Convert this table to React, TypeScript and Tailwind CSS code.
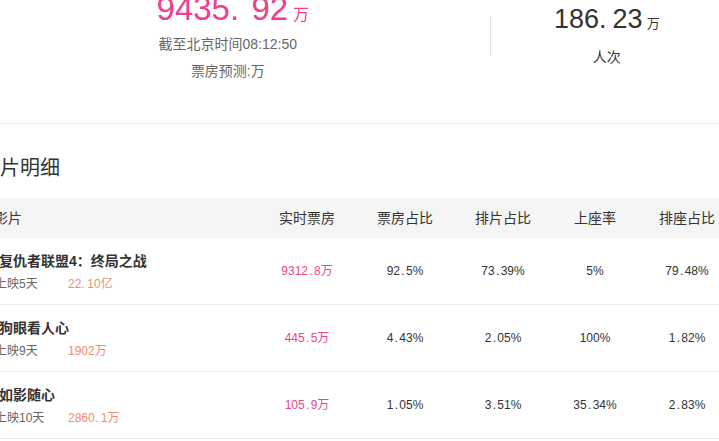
import React from "react";

function Num({ v, dot = "w-[0.5em]" }: { v: string; dot?: string }) {
  const i = v.indexOf(".");
  if (i < 0) return <>{v}</>;
  return (
    <>
      {v.slice(0, i)}
      <span className={"inline-block " + dot}>.</span>
      {v.slice(i + 1)}
    </>
  );
}

const rows = [
  { name: "复仇者联盟4：终局之战", days: "上映5天", sum: "22.10亿", bo: "9312.8万", r1: "92.5%", r2: "73.39%", r3: "5%", r4: "79.48%" },
  { name: "狗眼看人心", days: "上映9天", sum: "1902万", bo: "445.5万", r1: "4.43%", r2: "2.05%", r3: "100%", r4: "1.82%" },
  { name: "如影随心", days: "上映10天", sum: "2860.1万", bo: "105.9万", r1: "1.05%", r2: "3.51%", r3: "35.34%", r4: "2.83%" },
];

export default function App() {
  return (
    <div
      className="w-[719px] h-[441px] overflow-hidden bg-white text-[#333]"
      style={{ fontFamily: '"Liberation Sans", "Noto Sans CJK SC", sans-serif' }}
    >
      {/* top summary */}
      <div className="flex h-[124px] border-b border-[#e8e8e8]">
        <div className="w-[459px] flex flex-col items-center">
          <div className="h-[25px] pl-[10px] flex items-end">
            <span className="text-[33px] leading-none text-[#ef3f8d]">
              <Num v="9435.92" dot="w-[0.65em]" />
              <span className="ml-[5px] text-[16px]">万</span>
            </span>
          </div>
          <div className="mt-[9px] text-[14px] leading-[20px] text-[#666]">截至北京时间08:12:50</div>
          <div className="mt-[7px] text-[14px] leading-[20px] text-[#666]">票房预测:万</div>
        </div>
        <div className="ml-[34px] mt-[16px] w-px h-[40px] bg-[#e5e5e5]" />
        <div className="w-[230px] pl-[4px] flex flex-col items-center">
          <div className="h-[33px] flex items-end">
            <span className="text-[27px] leading-none text-[#333]">
              <Num v="186.23" />
              <span className="ml-[4px] text-[13px]">万</span>
            </span>
          </div>
          <div className="mt-[14px] text-[14px] leading-[20px] text-[#333]">人次</div>
        </div>
      </div>

      <div className="ml-[-20px] w-[756px]">
        <div className="mt-[30px] text-[20px] leading-[28px] text-[#333]">影片明细</div>
        <div className="mt-[16px] h-[40px] bg-[#f5f5f5] grid grid-cols-[278px_98px_98px_98px_86px_98px] items-center text-[14px] text-[#333]">
          <div className="pl-[14px]">影片</div>
          <div className="text-center">实时票房</div>
          <div className="text-center">票房占比</div>
          <div className="text-center">排片占比</div>
          <div className="text-center">上座率</div>
          <div className="text-center">排座占比</div>
        </div>
        {rows.map((r) => (
          <div
            key={r.name}
            className="h-[67px] border-b border-[#ebebeb] grid grid-cols-[278px_98px_98px_98px_86px_98px] items-center text-[12px] text-[#333]"
          >
            <div className="h-full flex flex-col pt-[13px]">
              <div className="pl-[19px] text-[14px] leading-[20px] font-bold text-[#333]">{r.name}</div>
              <div className="mt-[4px] pl-[15px] text-[12px] leading-[18px] flex">
                <span className="w-[73px] text-[#666]">{r.days}</span>
                <span className="text-[#ef8c6c]"><Num v={r.sum} /></span>
              </div>
            </div>
            <div className="text-center text-[#e8478a]"><Num v={r.bo} /></div>
            <div className="text-center"><Num v={r.r1} /></div>
            <div className="text-center"><Num v={r.r2} /></div>
            <div className="text-center"><Num v={r.r3} /></div>
            <div className="text-center"><Num v={r.r4} /></div>
          </div>
        ))}
      </div>
    </div>
  );
}
